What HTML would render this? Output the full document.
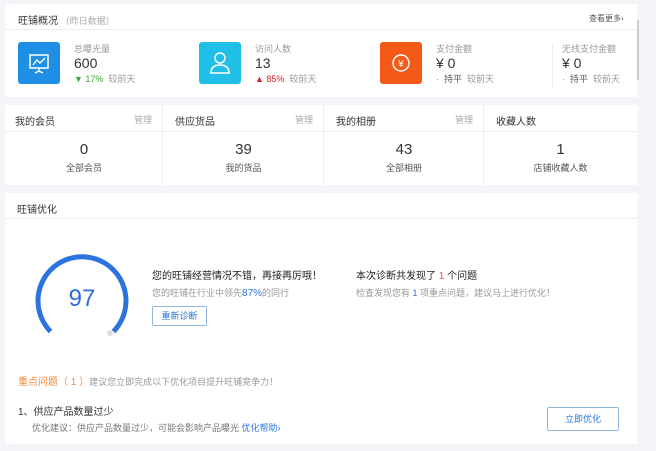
<!DOCTYPE html>
<html><head><meta charset="utf-8"><style>
*{margin:0;padding:0;box-sizing:border-box}
body{width:656px;height:451px;background:#f3f5f8;font-family:"Liberation Sans","Noto Sans CJK SC",sans-serif;position:relative;overflow:hidden;color:#333}
.p{position:absolute;background:#fff;left:5px;width:632px}
.a{position:absolute;white-space:nowrap}
.t{font-size:11px;color:#333}
.s{font-size:9px;color:#999}
.ic{position:absolute;width:42px;height:42px;border-radius:3px}
.cell{position:absolute;top:0;height:80px;width:158px;border-right:1px solid #eee}
</style></head><body>
<div class="p" style="top:4px;height:93px">
  <div class="a t" style="left:13px;top:8px;font-size:10px">旺铺概况 <span class="s" style="font-size:9px;color:#aaa">（昨日数据）</span></div>
  <div class="a s" style="left:584px;top:9px;color:#555;font-size:8px">查看更多›</div>
  <div style="position:absolute;left:0;right:0;top:25px;border-top:1px solid #eee"></div>
  <div class="ic" style="left:13px;top:38px;background:#1f8fe6">
    <svg width="42" height="42" viewBox="0 0 42 42"><rect x="12" y="13" width="18" height="13" fill="none" stroke="#fff" stroke-width="1.5"/><path d="M15 23l4-5 3 3 5-5M21 26v4M17 31l4-2 4 2" fill="none" stroke="#fff" stroke-width="1.4"/></svg>
  </div>
  <div class="a s" style="left:69px;top:38px">总曝光量</div>
  <div class="a" style="left:69px;top:51px;font-size:14px">600</div>
  <div class="a s" style="left:69px;top:68px"><span style="color:#3a3">▼ 17%</span>&nbsp; 较前天</div>
  <div class="ic" style="left:194px;top:38px;background:#1fbfe7">
    <svg width="42" height="42" viewBox="0 0 42 42"><circle cx="21" cy="16" r="5" fill="none" stroke="#fff" stroke-width="1.5"/><path d="M12 31c0-6 4-8 9-8s9 2 9 8z" fill="none" stroke="#fff" stroke-width="1.5"/></svg>
  </div>
  <div class="a s" style="left:250px;top:38px">访问人数</div>
  <div class="a" style="left:250px;top:51px;font-size:14px">13</div>
  <div class="a s" style="left:250px;top:68px"><span style="color:#d22">▲ 85%</span>&nbsp; 较前天</div>
  <div class="ic" style="left:375px;top:38px;background:#f45a17">
    <svg width="42" height="42" viewBox="0 0 42 42"><circle cx="21" cy="21" r="8" fill="none" stroke="#fff" stroke-width="1.4"/><text x="21" y="25" font-size="10" fill="#fff" text-anchor="middle" font-family="Liberation Sans">¥</text></svg>
  </div>
  <div class="a s" style="left:431px;top:38px">支付金额</div>
  <div class="a" style="left:431px;top:51px;font-size:14px">¥ 0</div>
  <div class="a s" style="left:431px;top:68px">· &nbsp;<span style="color:#555">持平</span>&nbsp; 较前天</div>
  <div style="position:absolute;left:547px;top:40px;height:44px;border-left:1px solid #eee"></div>
  <div class="a s" style="left:557px;top:38px">无线支付金额</div>
  <div class="a" style="left:557px;top:51px;font-size:14px">¥ 0</div>
  <div class="a s" style="left:557px;top:68px">· &nbsp;<span style="color:#555">持平</span>&nbsp; 较前天</div>
</div>
<div style="position:absolute;left:637px;top:20px;width:2px;height:60px;background:#ccc"></div>
<div class="p" style="top:105px;height:80px">
  <div style="position:absolute;left:0;right:0;top:26px;border-top:1px solid #eee"></div>
  <div class="cell" style="left:0"><div class="a" style="left:10px;top:8px;font-size:10px">我的会员</div><div class="a s" style="right:10px;top:8px;color:#aaa">管理</div><div class="a" style="left:0;width:158px;text-align:center;top:36px;font-size:15px">0</div><div class="a s" style="left:0;width:158px;text-align:center;top:56px;color:#555">全部会员</div></div>
  <div class="cell" style="left:158px;width:161px"><div class="a" style="left:12px;top:8px;font-size:10px">供应货品</div><div class="a s" style="right:10px;top:8px;color:#aaa">管理</div><div class="a" style="left:0;width:161px;text-align:center;top:36px;font-size:15px">39</div><div class="a s" style="left:0;width:161px;text-align:center;top:56px;color:#555">我的货品</div></div>
  <div class="cell" style="left:319px;width:160px"><div class="a" style="left:12px;top:8px;font-size:10px">我的相册</div><div class="a s" style="right:10px;top:8px;color:#aaa">管理</div><div class="a" style="left:0;width:160px;text-align:center;top:36px;font-size:15px">43</div><div class="a s" style="left:0;width:160px;text-align:center;top:56px;color:#555">全部相册</div></div>
  <div class="cell" style="left:479px;width:153px;border:none"><div class="a" style="left:12px;top:8px;font-size:10px">收藏人数</div><div class="a" style="left:0;width:153px;text-align:center;top:36px;font-size:15px">1</div><div class="a s" style="left:0;width:153px;text-align:center;top:56px;color:#555">店铺收藏人数</div></div>
</div>
<div class="p" style="top:193px;height:251px">
  <div class="a" style="left:12px;top:8px;font-size:10px">旺铺优化</div>
  <div style="position:absolute;left:0;right:0;top:25px;border-top:1px solid #eee"></div>
</div>
<svg style="position:absolute;left:30px;top:248px" width="104" height="104" viewBox="0 0 104 104">
  <path d="M20.5 83.5A44 44 0 1 1 83.5 83.5" fill="none" stroke="#2b74e0" stroke-width="5"/>
  <circle cx="80" cy="85" r="3" fill="#ddd"/>
  <text x="52" y="58" font-size="24" fill="#2b6fd6" text-anchor="middle" font-family="Liberation Sans">97</text>
</svg>
<div class="a" style="left:152px;top:267px;font-size:10px;color:#222">您的旺铺经营情况不错，再接再厉哦！</div>
<div class="a s" style="left:152px;top:286px">您的旺铺在行业中领先<span style="color:#2b74e0;font-size:10px">87%</span>的同行</div>
<div class="a" style="left:152px;top:306px;width:55px;height:20px;border:1px solid #8fb5e0;border-radius:2px;font-size:9px;color:#2b74e0;text-align:center;line-height:18px">重新诊断</div>
<div class="a" style="left:356px;top:267px;font-size:10px;color:#222">本次诊断共发现了 <span style="color:#e55">1</span> 个问题</div>
<div class="a s" style="left:356px;top:286px">检查发现您有 <span style="color:#2b74e0">1</span> 项重点问题，建议马上进行优化！</div>
<div class="a" style="left:18px;top:373px;font-size:10px;color:#f08a3c">重点问题（ 1 ）<span class="s" style="color:#999">建议您立即完成以下优化项目提升旺铺竞争力！</span></div>
<div class="a" style="left:18px;top:403px;font-size:10px;color:#333">1、供应产品数量过少</div>
<div class="a s" style="left:32px;top:421px;color:#777">优化建议：供应产品数量过少，可能会影响产品曝光 <span style="color:#2b74e0">优化帮助›</span></div>
<div class="a" style="left:547px;top:407px;width:72px;height:24px;border:1px solid #8fb5e0;border-radius:2px;font-size:9px;color:#2b74e0;text-align:center;line-height:22px">立即优化</div>
</body></html>
